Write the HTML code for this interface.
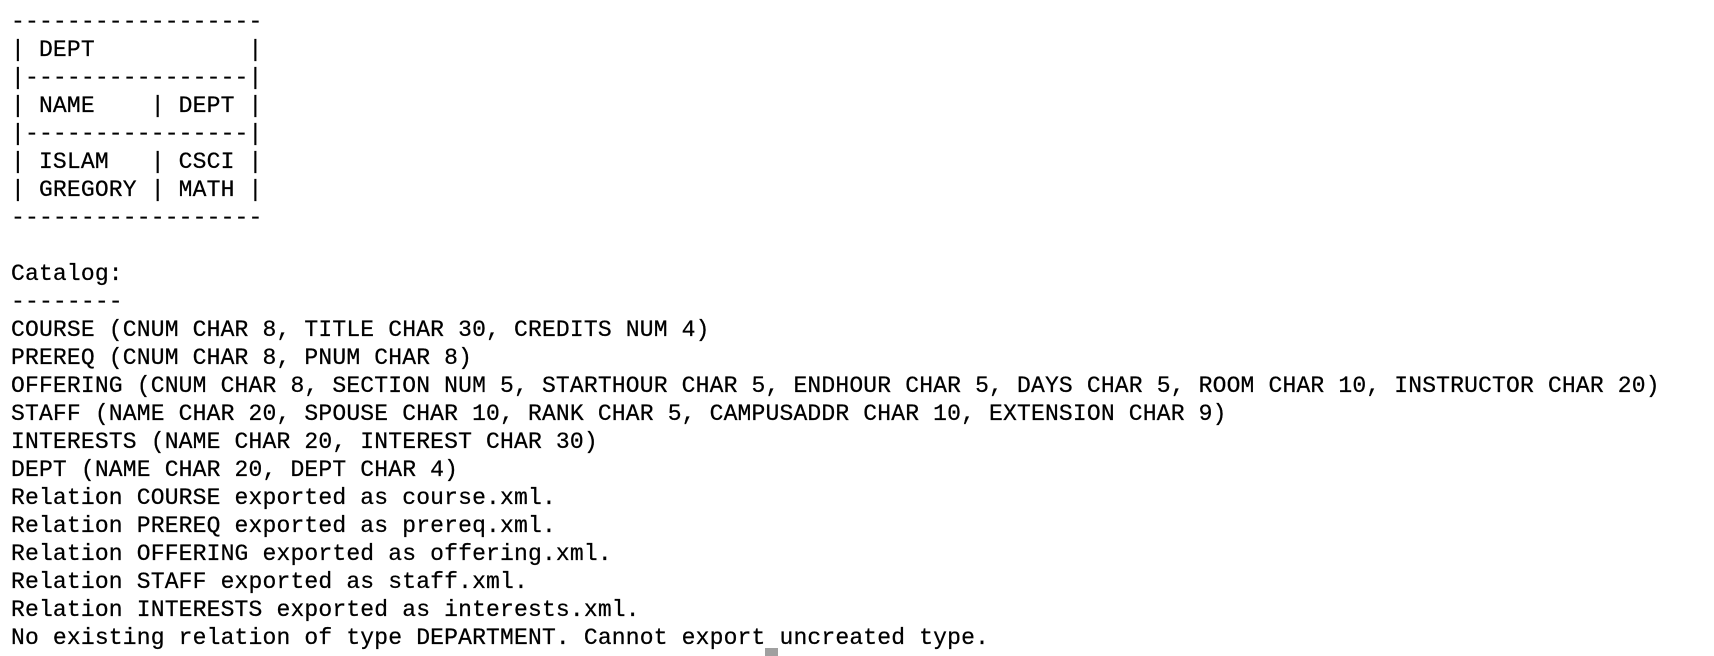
<!DOCTYPE html>
<html><head><meta charset="utf-8"><style>
html,body{margin:0;padding:0;background:#fff;width:1714px;height:656px;overflow:hidden}
pre{margin:0;padding:8px 0 0 11px;font-family:"Liberation Mono",monospace;font-size:23px;line-height:28px;color:#000;letter-spacing:0.17px;-webkit-text-stroke:0.25px #000}
.cur{position:absolute;left:765px;top:648px;width:13px;height:8px;background:#a0a0a0}
</style></head><body><pre>------------------
| DEPT           |
|----------------|
| NAME    | DEPT |
|----------------|
| ISLAM   | CSCI |
| GREGORY | MATH |
------------------

Catalog:
--------
COURSE (CNUM CHAR 8, TITLE CHAR 30, CREDITS NUM 4)
PREREQ (CNUM CHAR 8, PNUM CHAR 8)
OFFERING (CNUM CHAR 8, SECTION NUM 5, STARTHOUR CHAR 5, ENDHOUR CHAR 5, DAYS CHAR 5, ROOM CHAR 10, INSTRUCTOR CHAR 20)
STAFF (NAME CHAR 20, SPOUSE CHAR 10, RANK CHAR 5, CAMPUSADDR CHAR 10, EXTENSION CHAR 9)
INTERESTS (NAME CHAR 20, INTEREST CHAR 30)
DEPT (NAME CHAR 20, DEPT CHAR 4)
Relation COURSE exported as course.xml.
Relation PREREQ exported as prereq.xml.
Relation OFFERING exported as offering.xml.
Relation STAFF exported as staff.xml.
Relation INTERESTS exported as interests.xml.
No existing relation of type DEPARTMENT. Cannot export uncreated type.</pre><div class="cur"></div></body></html>
